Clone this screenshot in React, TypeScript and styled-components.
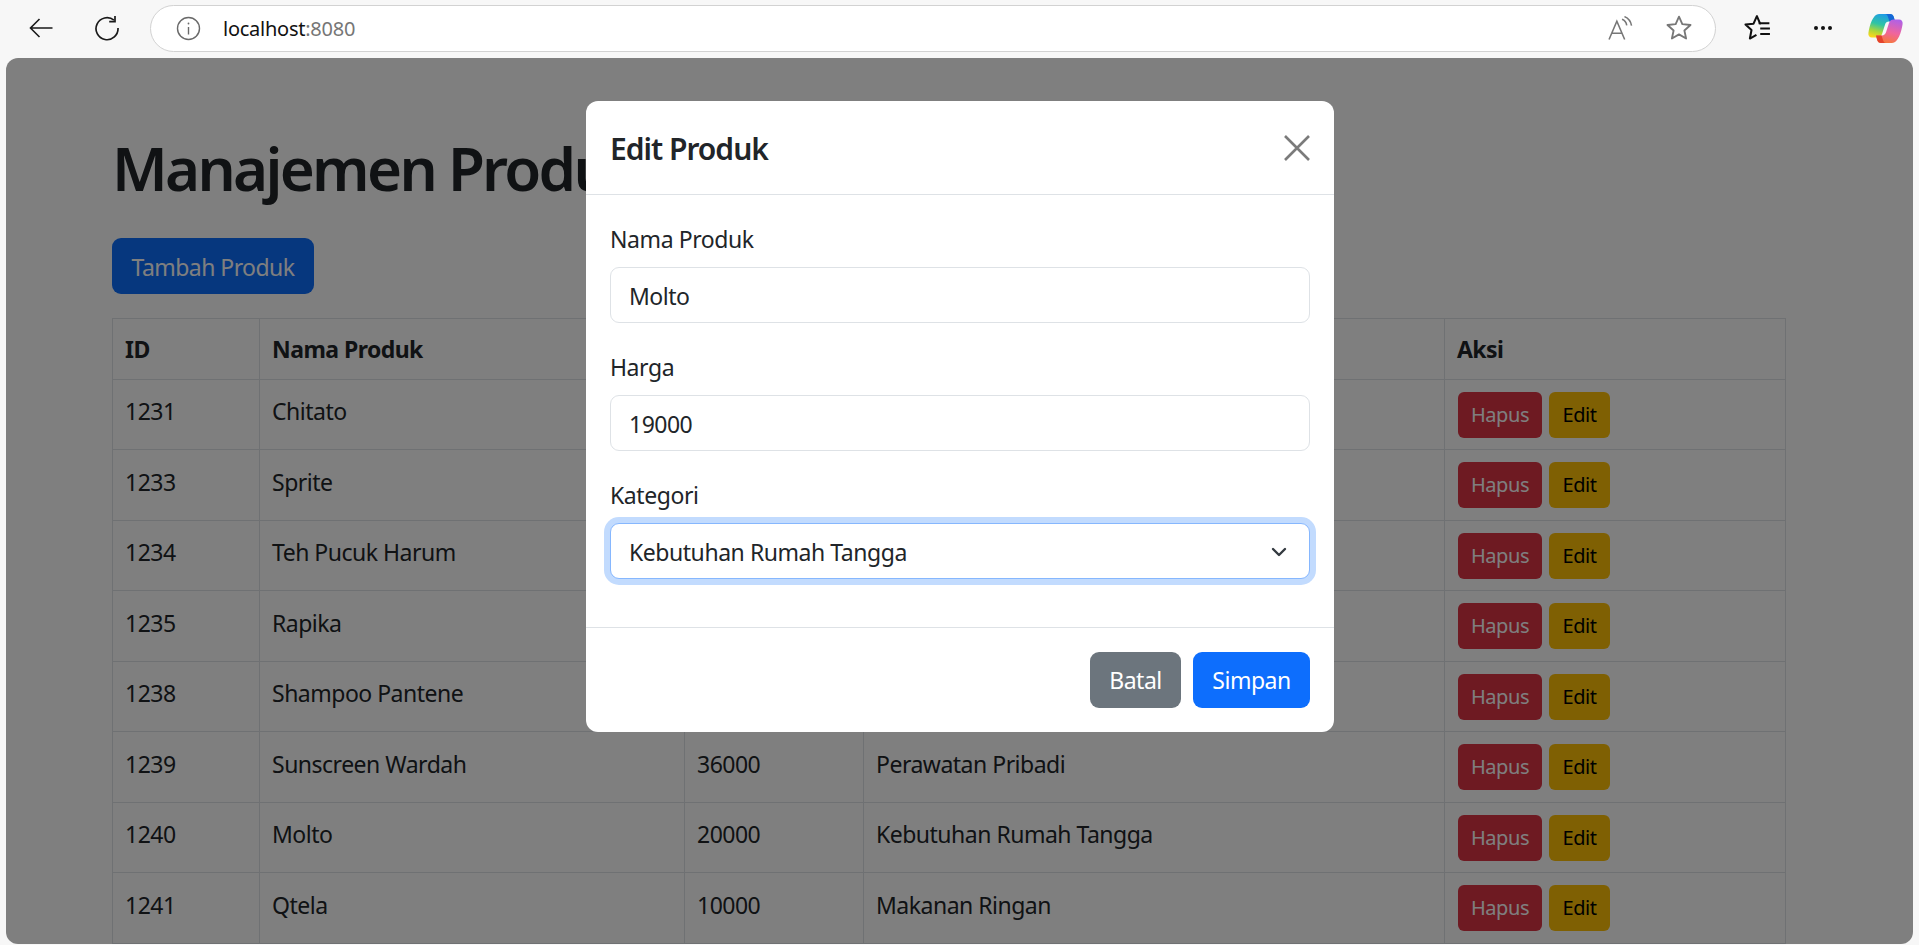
import React from "react";
import styled, { createGlobalStyle } from "styled-components";
import { ChevronDown } from "lucide-react";

const Global = createGlobalStyle`
  html, body { margin: 0; padding: 0; height: 945px; overflow: hidden; background: #f7f7f7; }
  * { box-sizing: border-box; }
  body { font-family: "Noto Sans", "Open Sans", sans-serif; }
`;

const FONT = `"Noto Sans", "Open Sans", sans-serif`;

const Shell = styled.div`
  width: 1919px;
  height: 945px;
  display: flex;
  flex-direction: column;
  position: relative;
  overflow: hidden;
`;

const Toolbar = styled.header`
  height: 58px;
  flex: none;
  display: flex;
  align-items: center;
  padding: 0 15px 2px 29px;
  background: #f7f7f7;
`;

const NavButton = styled.span<{ $gap: number }>`
  display: flex;
  margin-right: ${(p) => p.$gap}px;
  color: #1a1a1a;
`;

const AddressBar = styled.div`
  width: 1566px;
  height: 47px;
  flex: none;
  display: flex;
  align-items: center;
  padding: 0 22px 0 25px;
  margin-right: 27px;
  background: #fff;
  border: 1.5px solid #d2d2d2;
  border-radius: 24px;
`;

const Url = styled.span`
  margin-left: 22px;
  padding-top: 1px;
  font: 400 20px "Noto Sans", sans-serif;
  letter-spacing: -0.25px;
  color: #111;
  flex: 1;
`;

const Port = styled.span`
  color: #767676;
`;

const BarIcon = styled.span<{ $gap?: number }>`
  display: flex;
  margin-left: ${(p) => p.$gap ?? 0}px;
  color: #777;
`;

const ToolIcon = styled.span<{ $w: number; $gap?: number }>`
  display: flex;
  width: ${(p) => p.$w}px;
  margin-left: ${(p) => p.$gap ?? 0}px;
  justify-content: center;
  color: #111;
`;

const Viewport = styled.main`
  flex: 1;
  margin: 0 6px 1px 6px;
  background: #fff;
  border-radius: 12px;
  padding: 0 127px 0 106px;
  overflow: hidden;
  position: relative;
`;

const Backdrop = styled.div`
  position: absolute;
  inset: 0;
  background: rgba(0, 0, 0, 0.5);
`;

const Title = styled.h1`
  margin: 0;
  padding-top: 75px;
  font: 600 60px/70px ${FONT};
  letter-spacing: -2.7px;
  color: #212529;
  white-space: nowrap;
`;

const AddButton = styled.button`
  display: block;
  margin-top: 35px;
  width: 202px;
  height: 56px;
  font: 400 23px/1 ${FONT};
  letter-spacing: -0.55px;
  color: #fff;
  background: #0d6efd;
  border: 0;
  border-radius: 9px;
  padding: 2px 0 0;
`;

const Table = styled.table`
  margin-top: 24px;
  width: 1673px;
  table-layout: fixed;
  border-collapse: collapse;
  font: 400 23px/36px ${FONT};
  letter-spacing: -0.5px;
  color: #212529;
`;

const Th = styled.th`
  height: 60.5px;
  padding: 0 12px;
  border: 1.5px solid #dee2e6;
  text-align: left;
  font-weight: 700;
  letter-spacing: -0.55px;
`;

const Td = styled.td`
  height: 70.5px;
  padding: 0 12px 6px;
  border: 1.5px solid #dee2e6;
  white-space: nowrap;
`;

const ActionCell = styled.td`
  height: 70.5px;
  padding: 1px 12px 0 13px;
  border: 1.5px solid #dee2e6;
`;

const Actions = styled.div`
  display: flex;
  gap: 7px;
`;

const SmallButton = styled.button<{ $bg: string; $fg: string; $w: number }>`
  width: ${(p) => p.$w}px;
  height: 46px;
  padding: 0;
  border: 0;
  border-radius: 6px;
  background: ${(p) => p.$bg};
  color: ${(p) => p.$fg};
  font: 400 20px/1 ${FONT};
  letter-spacing: -0.45px;
`;

const Modal = styled.section`
  position: absolute;
  left: 586px;
  top: 101px;
  width: 748px;
  height: 631px;
  background: #fff;
  border-radius: 12px;
  display: flex;
  flex-direction: column;
`;

const ModalHeader = styled.div`
  height: 94px;
  flex: none;
  padding: 0 24px;
  display: flex;
  align-items: center;
  justify-content: space-between;
  border-bottom: 1.5px solid #dee2e6;
`;

const ModalTitle = styled.h5`
  margin: 0;
  padding-top: 2px;
  font: 600 30px/1 ${FONT};
  letter-spacing: -1px;
  color: #212529;
`;

const Close = styled.span`
  display: flex;
  color: #7b7b7b;
`;

const ModalBody = styled.div`
  flex: 1;
  padding: 24px 24px 0;
  display: flex;
  flex-direction: column;
  gap: 24px;
`;

const Field = styled.div`
  display: flex;
  flex-direction: column;
`;

const Label = styled.label`
  padding-top: 2px;
  font: 400 23px/36px ${FONT};
  letter-spacing: -0.42px;
  color: #212529;
  margin-bottom: 10px;
`;

const Input = styled.input`
  height: 56px;
  width: 100%;
  padding: 2px 18px 0;
  font: 400 23px/1 ${FONT};
  letter-spacing: -0.5px;
  color: #212529;
  background: #fff;
  border: 1.5px solid #dee2e6;
  border-radius: 9px;
  outline: none;
`;

const SelectBox = styled.div`
  height: 56px;
  width: 100%;
  padding: 2px 18px 0;
  display: flex;
  align-items: center;
  justify-content: space-between;
  font: 400 23px/1 ${FONT};
  letter-spacing: -0.45px;
  color: #212529;
  background: #fff;
  border: 1.5px solid #86b7fe;
  border-radius: 9px;
  box-shadow: 0 0 0 6px #c2dbfe;
`;

const ModalFooter = styled.div`
  height: 105px;
  flex: none;
  padding: 0 24px;
  display: flex;
  align-items: center;
  justify-content: flex-end;
  gap: 12px;
  border-top: 1.5px solid #dee2e6;
`;

const FooterButton = styled.button<{ $bg: string; $w: number }>`
  width: ${(p) => p.$w}px;
  height: 56px;
  padding: 1px 0 0;
  border: 0;
  border-radius: 9px;
  background: ${(p) => p.$bg};
  color: #fff;
  font: 400 23px/1 ${FONT};
  letter-spacing: -0.5px;
`;

const rows = [
  ["1231", "Chitato", "12000", "Makanan Ringan"],
  ["1233", "Sprite", "8000", "Minuman"],
  ["1234", "Teh Pucuk Harum", "5000", "Minuman"],
  ["1235", "Rapika", "15000", "Kebutuhan Rumah Tangga"],
  ["1238", "Shampoo Pantene", "30000", "Perawatan Pribadi"],
  ["1239", "Sunscreen Wardah", "36000", "Perawatan Pribadi"],
  ["1240", "Molto", "20000", "Kebutuhan Rumah Tangga"],
  ["1241", "Qtela", "10000", "Makanan Ringan"],
];

const colWidths = [147, 425, 179, 581, 341];

const Back = () => (
  <svg width="24" height="24" viewBox="0 0 24 24" fill="none" stroke="currentColor" strokeWidth="1.6">
    <path d="M23.500 12H1.500M10.500 3L1.500 12L10.500 21" />
  </svg>
);
const Refresh = () => (
  <svg width="26" height="26" viewBox="0 0 26 26" fill="none" stroke="currentColor" strokeWidth="1.7">
    <path d="M20 5.200A11 11 0 1 0 24 13" />
    <path d="M21 1v5.600h-5.800" />
  </svg>
);
const Info = () => (
  <svg width="25" height="25" viewBox="0 0 25 25" fill="none" stroke="#6a6a6a" strokeWidth="1.4">
    <circle cx="12.500" cy="12.500" r="11" />
    <path d="M12.500 11v7.500" />
    <circle cx="12.500" cy="7.500" r="0.9" fill="#6a6a6a" stroke="none" />
  </svg>
);
const ReadAloud = () => (
  <svg width="25" height="25" viewBox="0 0 24 24" fill="none" stroke="currentColor" strokeWidth="1.5">
    <path d="M1 22.500L8.500 5l7.500 17.500M3.800 16.500h9.600" />
    <path d="M13.500 3.200c2.500 1 4 3 4.500 5.800M15.800 .6c3.600 1.400 6 4.500 6.800 8.600" />
  </svg>
);
const Star = () => (
  <svg width="28" height="28" viewBox="0 0 26 26" fill="none" stroke="currentColor" strokeWidth="1.7" strokeLinejoin="round">
    <path d="M13 2.400l3.100 7 7.600.8-5.700 5.100 1.600 7.500L13 18.900l-6.600 3.900L8 15.300 2.300 10.200l7.600-.8z" />
  </svg>
);
const Favorites = () => (
  <svg width="28" height="28" viewBox="0 0 26 26" fill="none" stroke="currentColor" strokeWidth="1.9" strokeLinejoin="round">
    <path d="M16.500 8.600l-.7.1-2.900-6.700-3.100 7-7.500.8 5.600 5.100-1.500 7.900 6.100-3.500" />
    <path d="M14.500 8.500h10M16 13.500h9M16 18.500h9" />
  </svg>
);
const Dots = () => (
  <svg width="20" height="6" viewBox="0 0 20 6" fill="currentColor">
    <circle cx="3" cy="3" r="2" />
    <circle cx="10" cy="3" r="2" />
    <circle cx="17" cy="3" r="2" />
  </svg>
);
const lobe = "M11 1H22c2 0 3.200 1 3.800 3l1.200 4.500H21c-2 0-3.400 1.200-4 3.200L14 21c-.8 2.500-2.600 3.500-5 3.500H4C1.500 24.500 0 22.500.4 20 1.500 12 5 1 11 1z";
const ribbon = "M17 1h5c2 0 3.200 1 3.800 3l1.200 4.500h-5.500L20 4c-.5-2-1.500-3-3-3z";
const Copilot = () => (
  <svg width="35" height="31" viewBox="0 0 35 31">
    <defs>
      <linearGradient id="cpA" x1="0.6" y1="0" x2="0.3" y2="1">
        <stop offset="0" stopColor="#1f9be8" />
        <stop offset="0.45" stopColor="#2fc4a5" />
        <stop offset="0.75" stopColor="#a9d63c" />
        <stop offset="1" stopColor="#f8d81e" />
      </linearGradient>
      <linearGradient id="cpB" x1="0.6" y1="0" x2="0.3" y2="1">
        <stop offset="0" stopColor="#f6783a" />
        <stop offset="0.45" stopColor="#f0659c" />
        <stop offset="1" stopColor="#b061e6" />
      </linearGradient>
    </defs>
    <path d={lobe} fill="url(#cpA)" />
    <path d={ribbon} fill="#1668d6" />
    <g transform="rotate(180 17.500 15.500)">
      <path d={lobe} fill="url(#cpB)" />
      <path d={ribbon} fill="#e4432c" />
    </g>
  </svg>
);
const CloseIcon = () => (
  <svg width="26" height="26" viewBox="0 0 26 26" fill="none" stroke="currentColor" strokeWidth="2.600">
    <path d="M1 1L25 25M25 1L1 25" />
  </svg>
);

export default function App() {
  return (
    <Shell>
      <Global />
      <Toolbar>
        <NavButton $gap={41}><Back /></NavButton>
        <NavButton $gap={30}><Refresh /></NavButton>
        <AddressBar>
          <Info />
          <Url>localhost<Port>:8080</Port></Url>
          <BarIcon><ReadAloud /></BarIcon>
          <BarIcon $gap={32}><Star /></BarIcon>
        </AddressBar>
        <ToolIcon $w={28}><Favorites /></ToolIcon>
        <ToolIcon $w={20} $gap={42}><Dots /></ToolIcon>
        <ToolIcon $w={35} $gap={35}><Copilot /></ToolIcon>
      </Toolbar>
      <Viewport>
        <Title>Manajemen Produk</Title>
        <AddButton>Tambah Produk</AddButton>
        <Table>
          <colgroup>
            {colWidths.map((w) => (
              <col key={w} width={w} />
            ))}
          </colgroup>
          <thead>
            <tr>
              <Th>ID</Th>
              <Th>Nama Produk</Th>
              <Th>Harga</Th>
              <Th>Kategori</Th>
              <Th>Aksi</Th>
            </tr>
          </thead>
          <tbody>
            {rows.map((r) => (
              <tr key={r[0]}>
                {r.map((c) => (
                  <Td key={c}>{c}</Td>
                ))}
                <ActionCell>
                  <Actions>
                    <SmallButton $bg="#dc3545" $fg="#fff" $w={84}>Hapus</SmallButton>
                    <SmallButton $bg="#ffc107" $fg="#000" $w={61}>Edit</SmallButton>
                  </Actions>
                </ActionCell>
              </tr>
            ))}
          </tbody>
        </Table>
        <Backdrop />
      </Viewport>
      <Modal>
        <ModalHeader>
          <ModalTitle>Edit Produk</ModalTitle>
          <Close><CloseIcon /></Close>
        </ModalHeader>
        <ModalBody>
          <Field>
            <Label>Nama Produk</Label>
            <Input readOnly value="Molto" />
          </Field>
          <Field>
            <Label>Harga</Label>
            <Input readOnly value="19000" />
          </Field>
          <Field>
            <Label>Kategori</Label>
            <SelectBox>
              Kebutuhan Rumah Tangga
              <ChevronDown size={24} strokeWidth={2.4} color="#343a40" />
            </SelectBox>
          </Field>
        </ModalBody>
        <ModalFooter>
          <FooterButton $bg="#6c757d" $w={91}>Batal</FooterButton>
          <FooterButton $bg="#0d6efd" $w={117}>Simpan</FooterButton>
        </ModalFooter>
      </Modal>
    </Shell>
  );
}
